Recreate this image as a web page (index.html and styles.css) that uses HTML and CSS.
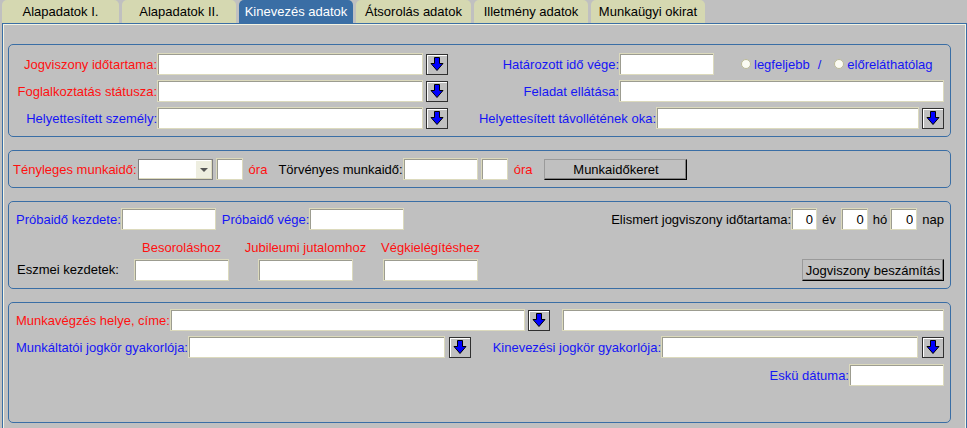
FILE: index.html
```html
<!doctype html>
<html lang="hu">
  <head>
    <meta charset="UTF-8" />
    <title>Kinevezés adatok</title>
    <link rel="stylesheet" href="styles.css">
  </head>
  <body>
    <div class="tabs">
      <div class="tab w117">Alapadatok I.</div>
      <div class="tab w114">Alapadatok II.</div>
      <div class="tab w114 active">Kinevezés adatok</div>
      <div class="tab w115">Átsorolás adatok</div>
      <div class="tab w114">Illetmény adatok</div>
      <div class="tab w114">Munkaügyi okirat</div>
    </div>

    <div class="panel">
      <!-- jogviszony -->
      <div class="box box-jogviszony">
        <div class="row">
          <label class="lbl red w148">Jogviszony időtartama:</label>
          <input class="fld w266" type="text" />
          <button class="pick"><svg viewBox="0 0 16 16"><path d="M5.5 1.5H10.5V7.5H14L8 14.5L2 7.5H5.5Z" /></svg></button>
          <label class="lbl blue w171">Határozott idő vége:</label>
          <input class="fld w95" type="text" />
          <span class="opt first"><span class="radio"></span>legfeljebb</span>
          <span class="slash blue">/</span>
          <span class="opt"><span class="radio"></span>előreláthatólag</span>
        </div>
        <div class="row">
          <label class="lbl red w148">Foglalkoztatás státusza:</label>
          <input class="fld w266" type="text" />
          <button class="pick"><svg viewBox="0 0 16 16"><path d="M5.5 1.5H10.5V7.5H14L8 14.5L2 7.5H5.5Z" /></svg></button>
          <label class="lbl blue w171">Feladat ellátása:</label>
          <input class="fld grow" type="text" />
        </div>
        <div class="row">
          <label class="lbl blue w148">Helyettesített személy:</label>
          <input class="fld w266" type="text" />
          <button class="pick"><svg viewBox="0 0 16 16"><path d="M5.5 1.5H10.5V7.5H14L8 14.5L2 7.5H5.5Z" /></svg></button>
          <label class="lbl blue w208">Helyettesített távollétének oka:</label>
          <input class="fld grow" type="text" />
          <button class="pick"><svg viewBox="0 0 16 16"><path d="M5.5 1.5H10.5V7.5H14L8 14.5L2 7.5H5.5Z" /></svg></button>
        </div>
      </div>

      <!-- munkaidő -->
      <div class="box box-munkaido">
        <div class="row">
          <label class="lbl red">Tényleges munkaidő:</label>
          <div class="combo"><span class="combo-btn"></span></div>
          <input class="fld w27 ml3" type="text" />
          <span class="unit ml6 red">óra</span>
          <label class="lbl ml11">Törvényes munkaidő:</label>
          <input class="fld w75" type="text" />
          <input class="fld w27 ml3" type="text" />
          <span class="unit ml6 red">óra</span>
          <button class="btn w143 ml12">Munkaidőkeret</button>
        </div>
      </div>

      <!-- próbaidő -->
      <div class="box box-proba">
        <div class="row">
          <label class="lbl blue">Próbaidő kezdete:</label>
          <input class="fld w95" type="text" />
          <label class="lbl blue ml6">Próbaidő vége:</label>
          <input class="fld w95" type="text" />
          <label class="lbl push">Elismert jogviszony időtartama:</label>
          <input class="fld num w26" type="text" value="0" />
          <span class="unit">év</span>
          <input class="fld num w27 ml5" type="text" value="0" />
          <span class="unit">hó</span>
          <input class="fld num w27 ml3" type="text" value="0" />
          <span class="unit">nap</span>
        </div>
        <div class="row row-eszmei">
          <label class="lbl w118 lbl-eszmei">Eszmei kezdetek:</label>
          <div class="col">
            <span class="col-head red">Besoroláshoz</span>
            <input class="fld w95" type="text" />
          </div>
          <div class="col ml29">
            <span class="col-head red">Jubileumi jutalomhoz</span>
            <input class="fld w95" type="text" />
          </div>
          <div class="col ml30">
            <span class="col-head red">Végkielégítéshez</span>
            <input class="fld w95" type="text" />
          </div>
          <button class="btn w142 push">Jogviszony beszámítás</button>
        </div>
      </div>

      <!-- munkavégzés -->
      <div class="box box-munkavegzes">
        <div class="row">
          <label class="lbl red">Munkavégzés helye, címe:</label>
          <input class="fld w355" type="text" />
          <button class="pick"><svg viewBox="0 0 16 16"><path d="M5.5 1.5H10.5V7.5H14L8 14.5L2 7.5H5.5Z" /></svg></button>
          <input class="fld grow ml12" type="text" />
        </div>
        <div class="row">
          <label class="lbl blue">Munkáltatói jogkör gyakorlója:</label>
          <input class="fld w257" type="text" />
          <button class="pick ml4"><svg viewBox="0 0 16 16"><path d="M5.5 1.5H10.5V7.5H14L8 14.5L2 7.5H5.5Z" /></svg></button>
          <label class="lbl blue push">Kinevezési jogkör gyakorlója:</label>
          <input class="fld w257" type="text" />
          <button class="pick ml4"><svg viewBox="0 0 16 16"><path d="M5.5 1.5H10.5V7.5H14L8 14.5L2 7.5H5.5Z" /></svg></button>
        </div>
        <div class="row row-esku">
          <label class="lbl blue push">Eskü dátuma:</label>
          <input class="fld w95" type="text" />
        </div>
      </div>
    </div>
  </body>
</html>
```

FILE: styles.css
```css
* {
  box-sizing: border-box;
}

body {
  margin: 0;
  padding: 0;
  font-family: 'Liberation Sans', Arial, sans-serif;
  font-size: 13px;
  background: #c0c0c0;
  color: #000;
  overflow: hidden;
  height: 428px;
}

/* tabs */
.tabs {
  display: flex;
  gap: 3px;
  margin-left: 2px;
  height: 23px;
}

.tab {
  height: 23px;
  padding-top: 4px;
  text-align: center;
  background: #d5d8b1;
  border-radius: 5px 5px 0 0;
  white-space: nowrap;
}

.tab.active {
  background: #3a6ea5;
  color: #fff;
}

/* main panel */
.panel {
  margin-left: 2px;
  width: 965px;
  height: 420px;
  border: 1px solid #3a6ea5;
  box-shadow: inset 1px 1px 0 #f3f3e2, inset -1px 0 0 #f3f3e2;
  padding: 20px 0 0 5px;
}

.box {
  width: 943px;
  border: 1px solid #3a6ea5;
  border-radius: 5px;
  padding-right: 6px;
  margin-bottom: 13px;
}

.box-jogviszony {
  height: 93px;
  padding-top: 8px;
}

.box-munkaido {
  height: 38px;
  padding-top: 7px;
  padding-left: 4px;
}

.box-proba {
  height: 88px;
  padding-top: 6px;
  padding-left: 7px;
}

.box-munkavegzes {
  height: 121px;
  padding-top: 6px;
  padding-left: 7px;
}

.row {
  display: flex;
  align-items: center;
  height: 22px;
  margin-bottom: 5px;
}

.row-esku {
  margin-top: 6px;
}

.row-eszmei {
  height: auto;
  align-items: flex-end;
  margin-top: 10px;
}

.lbl {
  white-space: nowrap;
  text-align: right;
  flex-shrink: 0;
}

.lbl-eszmei {
  text-align: left;
  padding-left: 1px;
  line-height: 22px;
}

.red {
  color: #ff1010;
}

.blue {
  color: #1515f5;
}

/* inputs */
.fld {
  height: 22px;
  margin: 0;
  padding: 0 3px;
  font: inherit;
  background: #fff;
  border: 1px solid #dcdabd;
  box-shadow: inset 1px 1px 0 #9c9c90;
  flex-shrink: 0;
}

.fld.num {
  text-align: right;
}

.fld.grow {
  flex: 1;
  width: auto;
}

.combo {
  position: relative;
  width: 75px;
  height: 21px;
  margin-left: 1px;
  background: #fff;
  border: 1px solid #7f7f7f;
  box-shadow: inset -1px -1px 0 #dcdabd;
}

.combo-btn {
  position: absolute;
  top: 1px;
  right: 1px;
  width: 15px;
  height: 17px;
  background: #eeeee0;
}

.combo-btn::after {
  content: '';
  position: absolute;
  left: 4px;
  top: 7px;
  border-left: 4px solid transparent;
  border-right: 4px solid transparent;
  border-top: 4px solid #555;
}

.pick {
  width: 22px;
  height: 21px;
  margin: 0 0 0 3px;
  padding: 0;
  background: #c0c0c0;
  border: 1px solid #303030;
  box-shadow: inset 1px 1px 0 #fff;
  display: flex;
  align-items: center;
  justify-content: center;
  flex-shrink: 0;
}

.pick svg {
  width: 16px;
  height: 16px;
}

.pick path {
  fill: #0000ff;
  stroke: #000;
  stroke-width: 1;
}

.btn {
  height: 21px;
  margin: 0;
  padding: 0;
  font: inherit;
  color: #000;
  background: #c0c0c0;
  border: 1px solid;
  border-color: #9a9a9a #000 #000 #9a9a9a;
  box-shadow: inset -1px -1px 0 #808080;
  flex-shrink: 0;
}

.box-proba .btn {
  height: 22px;
}

/* radios */
.opt {
  display: flex;
  align-items: center;
  color: #1515f5;
  white-space: nowrap;
}

.opt.first {
  margin-left: 27px;
}

.radio {
  width: 10px;
  height: 10px;
  border-radius: 50%;
  background: #fbfbf3;
  border: 1px solid #bdbb98;
  margin-right: 3px;
}

.slash {
  margin: 0 13px 0 8px;
}

.unit {
  margin-left: 5px;
}

/* column headers */
.col {
  display: flex;
  flex-direction: column;
  align-items: center;
  width: 95px;
  flex-shrink: 0;
}

.col-head {
  white-space: nowrap;
  height: 16px;
  margin-bottom: 3px;
}

/* spacing helpers */
.push { margin-left: auto; }
.ml3 { margin-left: 3px; }
.ml4 { margin-left: 4px; }
.ml5 { margin-left: 5px; }
.ml6 { margin-left: 6px; }
.ml11 { margin-left: 11px; }
.ml12 { margin-left: 12px; }
.ml29 { margin-left: 29px; }
.ml30 { margin-left: 30px; }

/* widths */
.w26 { width: 26px; }
.w27 { width: 27px; }
.w75 { width: 75px; }
.w95 { width: 95px; }
.w114 { width: 114px; }
.w115 { width: 115px; }
.w117 { width: 117px; }
.w118 { width: 118px; }
.w142 { width: 142px; }
.w143 { width: 143px; }
.w148 { width: 148px; }
.w171 { width: 171px; }
.w208 { width: 208px; }
.w257 { width: 257px; }
.w266 { width: 266px; }
.w355 { width: 355px; }
```
